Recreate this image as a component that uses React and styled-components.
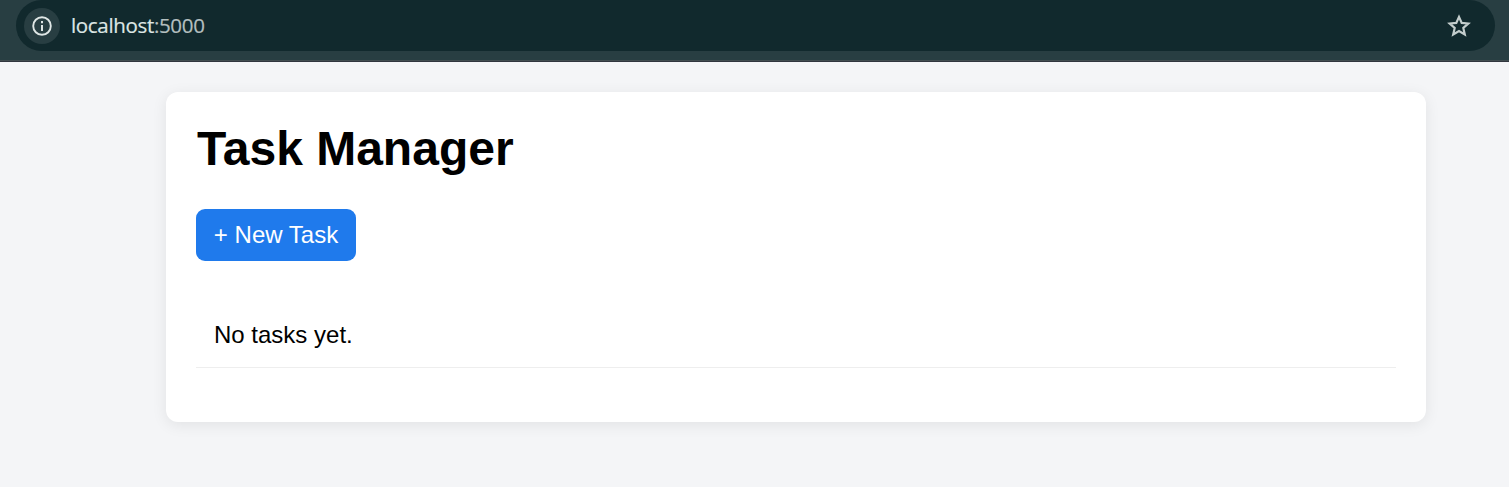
import React from "react";
import styled, { createGlobalStyle } from "styled-components";

const GlobalStyle = createGlobalStyle`
  * { box-sizing: border-box; }
  body { margin: 0; background: #f4f5f7; font-family: "Liberation Sans", Arial, sans-serif; color: #000; }
`;

const Window = styled.div`
  height: 487px;
  overflow: hidden;
`;

const Toolbar = styled.header`
  height: 62px;
  padding: 0 14px 0 16px;
  background: #283e42;
  border-bottom: 1px solid #31363e;
  box-shadow: inset 0 -1px 0 #414d50;
`;

const AddressBar = styled.div`
  display: flex;
  align-items: center;
  height: 51px;
  padding: 0 23px 0 8px;
  border-radius: 26px;
  background: #11292d;
`;

const SiteInfo = styled.span`
  display: flex;
  align-items: center;
  justify-content: center;
  width: 36px;
  height: 36px;
  border-radius: 50%;
  background: #283e42;
  color: #dfe6e5;
`;

const Address = styled.span`
  flex: 1;
  margin-left: 11px;
  padding-bottom: 1px;
  font: 20.5px/28px "Open Sans", "Noto Sans", sans-serif;
  letter-spacing: -0.33px;
  -webkit-text-stroke: 0.2px;
  color: #dde6e4;
`;

const Port = styled.span`
  color: #b4bfbf;
`;

const Card = styled.main`
  width: 1260px;
  height: 330px;
  margin: 30px 0 0 166px;
  padding: 29px 30px 30px;
  border-radius: 12px;
  background: #fff;
  box-shadow: 0 3px 15px rgba(0, 0, 0, 0.08);
`;

const Title = styled.h1`
  margin: 0 0 33px;
  padding-left: 1px;
  font-size: 48px;
  line-height: 55px;
`;

const NewTaskButton = styled.button`
  display: block;
  width: 160px;
  height: 52px;
  padding: 0 0 2px;
  border: 0;
  border-radius: 9px;
  background: #1f7aec;
  color: #fff;
  font: 24px/27px "Liberation Sans", Arial, sans-serif;
`;

const TaskList = styled.div`
  margin-top: 42px;
`;

const TaskRow = styled.div`
  padding: 18px 18px 19px;
  border-bottom: 1px solid #eee;
  font-size: 24px;
  line-height: 27px;
`;

const InfoIcon = () => (
  <svg width="20" height="20" viewBox="0 0 20 20" fill="none" stroke="currentColor" strokeWidth="1.9">
    <circle cx="10" cy="10" r="8.8" />
    <path d="M10 9v6M10 5v2.2" strokeWidth="2" />
  </svg>
);

const StarIcon = () => (
  <svg width="26" height="26" viewBox="0 0 26 26" fill="none" stroke="#c3cdcc" strokeWidth="2.2">
    <path d="M13 3.9l2.7 6 6.6.6-5 4.4 1.5 6.6-5.8-3.5-5.8 3.5 1.5-6.6-5-4.4 6.6-.6z" />
  </svg>
);

export default function App() {
  return (
    <Window>
      <GlobalStyle />
      <Toolbar>
        <AddressBar>
          <SiteInfo><InfoIcon /></SiteInfo>
          <Address>localhost<Port>:5000</Port></Address>
          <StarIcon />
        </AddressBar>
      </Toolbar>
      <Card>
        <Title>Task Manager</Title>
        <NewTaskButton>+ New Task</NewTaskButton>
        <TaskList>
          <TaskRow>No tasks yet.</TaskRow>
        </TaskList>
      </Card>
    </Window>
  );
}
